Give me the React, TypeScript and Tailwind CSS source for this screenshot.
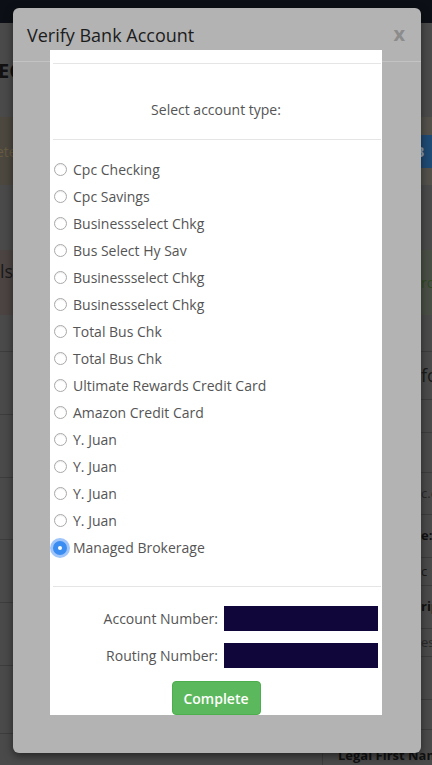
import React from "react";

const accounts = [
  "Cpc Checking",
  "Cpc Savings",
  "Businessselect Chkg",
  "Bus Select Hy Sav",
  "Businessselect Chkg",
  "Businessselect Chkg",
  "Total Bus Chk",
  "Total Bus Chk",
  "Ultimate Rewards Credit Card",
  "Amazon Credit Card",
  "Y. Juan",
  "Y. Juan",
  "Y. Juan",
  "Y. Juan",
  "Managed Brokerage",
];

function Radio({ checked }: { checked: boolean }) {
  if (checked) {
    return (
      <span className="flex h-[14px] w-[14px] shrink-0 items-center justify-center rounded-full bg-[#3b8df2] shadow-[0_0_0_3px_rgba(80,150,245,0.55)]">
        <span className="h-[4px] w-[4px] rounded-full bg-white" />
      </span>
    );
  }
  return (
    <span className="h-[13px] w-[13px] shrink-0 rounded-full border border-[#a9a9a9] bg-white shadow-[inset_0_1px_1px_rgba(0,0,0,0.08)]" />
  );
}

export default function App() {
  return (
    <div
      className="relative h-[765px] w-[432px] overflow-hidden bg-[#4a4a4a]"
      style={{ fontFamily: '"Open Sans", "Noto Sans", sans-serif' }}
    >
      {/* Background page (dimmed) */}
      <div className="h-[23px] bg-[#0c1016]" />
      <div className="grid grid-cols-2">
        {/* left column */}
        <div className="flex flex-col">
          <div className="h-[94px] pt-[36px] text-[20px] font-bold leading-[24px] text-[#111] -ml-[2px]">EC</div>
          <div className="flex h-[68px] items-center bg-[#4c483f] text-[14px] text-[#665a42] -ml-[4px]">ete</div>
          <div className="h-[65px]" />
          <div className="flex h-[65px] items-start bg-[#4b4443] pt-[8px] text-[18px] text-[#1a1a1a]">ls</div>
          <div className="h-[37px] border-b border-[#3d3d3d]" />
          <div className="h-[63px] border-b border-[#3d3d3d]" />
          <div className="h-[63px] border-b border-[#3d3d3d]" />
          <div className="h-[62px] border-b border-[#3d3d3d]" />
          <div className="h-[63px] border-b border-[#3d3d3d]" />
          <div className="h-[63px] border-b border-[#3d3d3d]" />
          <div className="h-[68px] border-b border-[#3d3d3d]" />
        </div>
        {/* right column */}
        <div className="flex flex-col items-end">
          <div className="h-[94px] w-full" />
          <div className="flex h-[68px] w-full items-center justify-end bg-[#53514a]">
            <div className="flex h-[33px] w-[20px] items-center bg-[#1f4a74] pl-[3px] text-[14px] font-bold text-[#8ea3b8]">B</div>
          </div>
          <div className="h-[65px] w-full" />
          <div className="flex h-[65px] w-full items-center justify-end bg-[#4a4f46] text-[14px] text-[#2f4a24]">
            <span className="w-[11px] overflow-hidden">ro</span>
          </div>
          <div className="h-[37px] w-full border-b border-[#3d3d3d]" />
          <div className="flex h-[48px] w-full items-center justify-end border-b border-[#3d3d3d] text-[18px] text-[#1a1a1a]">
            <span className="w-[11px] overflow-hidden">fo</span>
          </div>
          <div className="h-[33px] w-full border-b border-[#3d3d3d]" />
          <div className="h-[40px] w-full border-b border-[#3d3d3d]" />
          <div className="flex h-[42px] w-full items-center justify-end border-b border-[#3d3d3d] text-[13px] text-[#2a2a2a]">
            <span className="w-[11px] overflow-hidden">c.c</span>
          </div>
          <div className="flex h-[43px] w-full items-center justify-end border-b border-[#3d3d3d] text-[13px] font-bold text-[#111]">
            <span className="w-[11px] overflow-hidden">e:</span>
          </div>
          <div className="flex h-[28px] w-full items-center justify-end border-b border-[#3d3d3d] text-[13px] text-[#1a1a1a]">
            <span className="w-[11px] overflow-hidden">c</span>
          </div>
          <div className="flex h-[43px] w-full items-center justify-end border-b border-[#3d3d3d] text-[13px] font-bold text-[#111]">
            <span className="w-[11px] overflow-hidden">rip</span>
          </div>
          <div className="flex h-[28px] w-full items-center justify-end border-b border-[#3d3d3d] text-[13px] text-[#2a2a2a]">
            <span className="w-[11px] overflow-hidden">ess</span>
          </div>
          <div className="h-[43px] w-full border-b border-[#3d3d3d]" />
          <div className="h-[30px] w-full border-b border-[#3d3d3d]" />
          <div className="flex h-[40px] w-full">
            <div className="ml-[106px] h-full border-l border-[#3d3d3d] pl-[15px] pt-[16px] text-[13px] font-bold leading-[18px] text-[#111] whitespace-nowrap">
              Legal First Name
            </div>
          </div>
        </div>
      </div>

      {/* Modal */}
      <div className="absolute left-[13px] top-[8px] h-[745px] w-[408px] rounded-[6px] bg-[#b3b3b3] shadow-[0_3px_9px_rgba(0,0,0,0.5)]">
        <div className="flex h-[54px] items-center justify-between border-b border-[#c3c3c3] pl-[14px] pr-[16px]">
          <span className="text-[18px] leading-[24px] text-[#1c1c1c]">Verify Bank Account</span>
          <span className="pb-[2px] text-[20px] font-bold leading-[20px] text-[#8c8c8c]">x</span>
        </div>

        {/* white body panel */}
        <div className="absolute left-[37px] top-[42px] flex h-[665px] w-[332px] flex-col overflow-hidden bg-white text-[14px] text-[#555]">
          <div className="h-[13px] shrink-0" />
          <div className="ml-[3px] mr-[1px] h-px shrink-0 bg-[#e5e5e5]" />
          <div className="flex h-[75px] shrink-0 justify-center pt-[36px] leading-[20px]">Select account type:</div>
          <div className="ml-[3px] mr-[1px] h-px shrink-0 bg-[#e5e5e5]" />
          <div className="flex shrink-0 flex-col pb-[25px] pt-[16px]">
            {accounts.map((a, i) => {
              const checked = i === accounts.length - 1;
              return (
                <label key={i} className="flex h-[27px] items-center">
                  <span className={checked ? "ml-[3px] mr-[6px] flex" : "ml-[4px] mr-[6px] flex"}>
                    <Radio checked={checked} />
                  </span>
                  <span className="leading-[20px]">{a}</span>
                </label>
              );
            })}
          </div>
          <div className="ml-[3px] mr-[1px] h-px shrink-0 bg-[#e5e5e5]" />
          <div className="flex shrink-0 flex-col gap-[12px] pt-[19px]">
            <div className="flex h-[25px] items-center">
              <span className="w-[168px] text-right leading-[20px]">Account Number:</span>
              <span className="ml-[6px] h-[25px] w-[154px] bg-[#10063a]" />
            </div>
            <div className="flex h-[25px] items-center">
              <span className="w-[168px] text-right leading-[20px]">Routing Number:</span>
              <span className="ml-[6px] h-[25px] w-[154px] bg-[#10063a]" />
            </div>
          </div>
          <div className="flex shrink-0 justify-center pt-[13px]">
            <button className="h-[34px] w-[89px] rounded-[4px] border border-[#4cae4c] bg-[#5cb85c] text-[14px] font-semibold text-white">
              Complete
            </button>
          </div>
        </div>
      </div>
    </div>
  );
}
